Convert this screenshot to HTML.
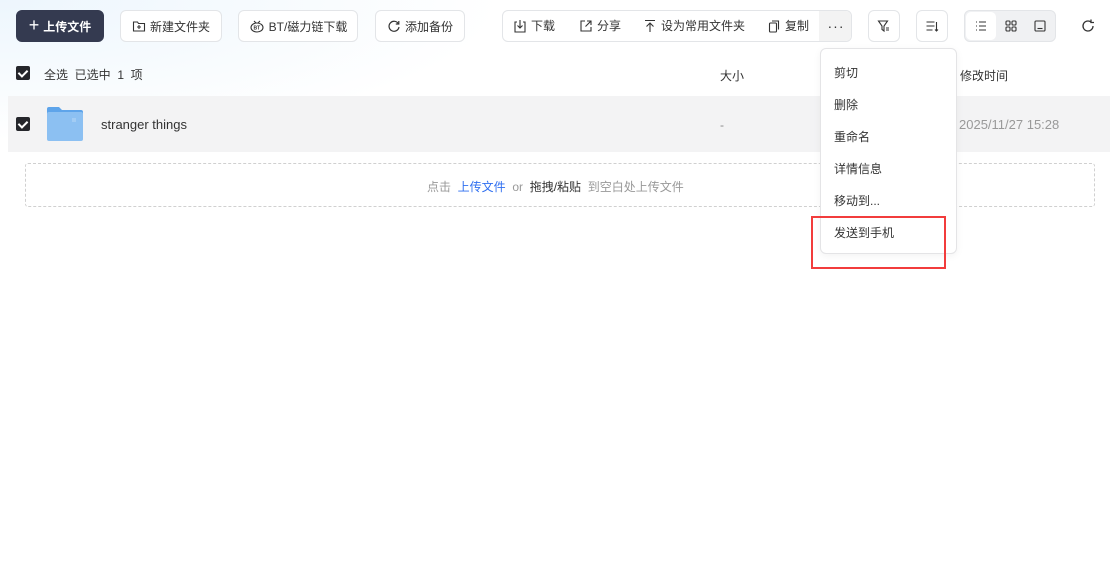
<!DOCTYPE html>
<html><head><meta charset="utf-8"><style>
*{box-sizing:border-box;margin:0;padding:0}
body{width:1110px;height:573px;overflow:hidden;background:#fff;font-family:"Liberation Sans","Noto Sans CJK SC",sans-serif;font-size:12px;color:#333;position:relative}
.bg{position:absolute;left:0;top:0;width:1110px;height:160px;background:radial-gradient(ellipse 500px 140px at 0 0,#edf6fd 0%,rgba(255,255,255,0) 100%)}
.a{position:absolute}
.btn{position:absolute;top:10px;height:32px;border:1px solid #e3e5e8;border-radius:6px;background:#fff;display:flex;align-items:center;justify-content:center;gap:4px;font-size:12px;color:#333}
.cb{position:absolute;width:14px;height:14px;background:#25262b;border-radius:2px}
.cb:after{content:"";position:absolute;left:4px;top:2px;width:4px;height:7px;border:solid #fff;border-width:0 2px 2px 0;transform:rotate(45deg)}
.mi{position:absolute;left:834px;font-size:12px;color:#333}
.ti{position:absolute;top:6px;display:flex;align-items:center;gap:4px;white-space:nowrap}
svg{display:block}
</style></head><body>
<div class="bg"></div>
<div class="btn" style="left:16px;width:88px;background:#343a50;border-color:#343a50;color:#fff;font-weight:bold"><span style="font-size:18px;font-weight:normal;margin-top:-2px">+</span>上传文件</div>
<div class="btn" style="left:120px;width:102px"><svg width="14" height="14" viewBox="0 0 14 14" fill="none" stroke="#333" stroke-width="1.1"><path d="M1.5 3h4l1 1.5h6v7.5h-11z"/><path d="M7 6v4M5 8h4"/></svg>新建文件夹</div>
<div class="btn" style="left:238px;width:120px"><svg width="16" height="14" viewBox="0 0 16 14" fill="none" stroke="#333" stroke-width="1.1"><ellipse cx="8" cy="8.5" rx="6" ry="4.5"/><path d="M5 2l2 2M11 2l-2 2"/><text x="4.5" y="10.5" font-size="5" fill="#333" stroke="none" font-weight="bold">BT</text></svg>BT/磁力链下载</div>
<div class="btn" style="left:375px;width:90px"><svg width="14" height="14" viewBox="0 0 14 14" fill="none" stroke="#333" stroke-width="1.2"><path d="M11.5 5A5 5 0 1 0 12 8"/><path d="M11.8 2v3h-3"/></svg>添加备份</div>
<div class="btn" style="left:502px;width:350px;overflow:hidden">
 <div class="ti" style="left:10px"><svg width="14" height="14" viewBox="0 0 14 14" fill="none" stroke="#333" stroke-width="1.1"><path d="M4 3H2v10h10V3h-2M7 1v8M4.5 6.5L7 9l2.5-2.5"/></svg>下载</div>
 <div class="ti" style="left:76px"><svg width="14" height="14" viewBox="0 0 14 14" fill="none" stroke="#333" stroke-width="1.1"><path d="M6 2H2v10h10V8M8 2h4v4M12 2L6.5 7.5"/></svg>分享</div>
 <div class="ti" style="left:140px"><svg width="14" height="14" viewBox="0 0 14 14" fill="none" stroke="#333" stroke-width="1.1"><path d="M2 1.5h10M7 4v9M3.5 7.5L7 4l3.5 3.5"/></svg>设为常用文件夹</div>
 <div class="ti" style="left:264px"><svg width="14" height="14" viewBox="0 0 14 14" fill="none" stroke="#333" stroke-width="1.1"><rect x="2.5" y="4" width="7" height="9" rx="1"/><path d="M5 2h6.5v8.5"/></svg>复制</div>
 <div style="position:absolute;left:316px;top:0;width:34px;height:30px;background:#f3f3f3;display:flex;align-items:center;justify-content:center;font-size:14px;letter-spacing:1px">···</div>
</div>
<div class="btn" style="left:868px;width:32px"><svg width="14" height="14" viewBox="0 0 14 14" fill="none" stroke="#333" stroke-width="1.1"><path d="M1.5 2h9l-3.5 5v5l-2-1.5V7z"/><path d="M9 9h3M9 11h3"/></svg></div>
<div class="btn" style="left:916px;width:32px"><svg width="14" height="14" viewBox="0 0 14 14" fill="none" stroke="#333" stroke-width="1.1"><path d="M1.5 3h8M1.5 7h8M1.5 11h6M11.5 3v9M10 10.5l1.5 1.5 1.5-1.5"/></svg></div>
<div class="btn" style="left:964px;width:92px;background:#f0f1f3;justify-content:flex-start;gap:0">
 <div style="width:30px;height:28px;margin-left:1px;background:#fff;border-radius:5px;display:flex;align-items:center;justify-content:center"><svg width="12" height="12" viewBox="0 0 12 12" fill="none" stroke="#333" stroke-width="1.1"><path d="M1 2h1M4 2h7M1 6h1M4 6h7M1 10h1M4 10h7"/></svg></div>
 <div style="width:30px;display:flex;justify-content:center"><svg width="12" height="12" viewBox="0 0 12 12" fill="none" stroke="#333" stroke-width="1.1"><rect x="1" y="1" width="4" height="4" rx="1"/><rect x="7" y="1" width="4" height="4" rx="1"/><rect x="1" y="7" width="4" height="4" rx="1"/><rect x="7" y="7" width="4" height="4" rx="1"/></svg></div>
 <div style="width:30px;display:flex;justify-content:center"><svg width="12" height="12" viewBox="0 0 12 12" fill="none" stroke="#333" stroke-width="1.1"><rect x="1" y="1" width="10" height="10" rx="1"/><path d="M3.5 8.5h5"/></svg></div>
</div>
<div class="a" style="left:1080px;top:18px"><svg width="16" height="16" viewBox="0 0 16 16" fill="none" stroke="#333" stroke-width="1.3"><path d="M13 8A5 5 0 1 1 11 4"/><path d="M11 1.5V4.5H14"/></svg></div>

<div class="cb" style="left:16px;top:66px"></div>
<div class="a" style="left:44px;top:66px">全选&nbsp;&nbsp;已选中&nbsp;&nbsp;1&nbsp;&nbsp;项</div>
<div class="a" style="left:720px;top:67px">大小</div>
<div class="a" style="left:960px;top:67px">修改时间</div>

<div class="a" style="left:8px;top:96px;width:1102px;height:56px;background:#f3f3f4"></div>
<div class="cb" style="left:16px;top:117px"></div>
<div class="a" style="left:46px;top:107px"><svg width="38" height="35" viewBox="0 0 38 35"><path d="M1 2a2 2 0 0 1 2-2h10l3 3h19a2 2 0 0 1 2 2v4H1z" fill="#5ea4ea"/><rect x="1" y="5" width="36" height="29" rx="2" fill="#8cc0f2"/><path d="M26 12h4M26 14h4" stroke="#b9d9f7"/></svg></div>
<div class="a" style="left:101px;top:117px;font-size:13px">stranger things</div>
<div class="a" style="left:720px;top:118px;color:#888">-</div>
<div class="a" style="left:959px;top:117px;color:#999;font-size:13px">2025/11/27 15:28</div>

<div class="a" style="left:25px;top:163px;width:1070px;height:44px;border:1px dashed #d0d0d0;border-radius:3px"></div>
<div class="a" style="left:427px;top:178px;color:#999">点击&nbsp;&nbsp;<span style="color:#2f6ff0">上传文件</span>&nbsp;&nbsp;or&nbsp;&nbsp;<span style="color:#333">拖拽/粘贴</span>&nbsp;&nbsp;到空白处上传文件</div>

<div class="a" style="left:820px;top:48px;width:137px;height:206px;background:#fff;border:1px solid #e4e4e6;border-radius:6px;box-shadow:0 2px 8px rgba(0,0,0,.05)"></div>
<div class="mi" style="top:64px">剪切</div>
<div class="mi" style="top:96px">删除</div>
<div class="mi" style="top:128px">重命名</div>
<div class="mi" style="top:160px">详情信息</div>
<div class="mi" style="top:192px">移动到...</div>
<div class="mi" style="top:224px">发送到手机</div>
<div class="a" style="left:811px;top:216px;width:135px;height:53px;border:2px solid #f23c3c"></div>
</body></html>
